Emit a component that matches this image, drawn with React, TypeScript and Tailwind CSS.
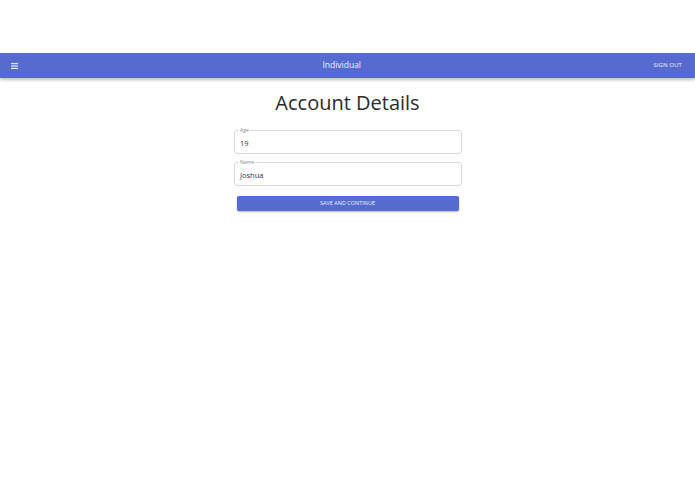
import React from "react";

function Field({ label, value }: { label: string; value: string }) {
  return (
    <div className="relative flex h-[24px] items-center rounded-[3px] border border-[#d9d9d9] px-[5px]">
      <span className="absolute -top-[3px] left-[4px] bg-white px-[1px] text-[5px] leading-[5px] text-[#8a8a8a]">
        {label}
      </span>
      <span className="pt-[1px] text-[7.5px] leading-[10px] text-[#333]">{value}</span>
    </div>
  );
}

export default function App() {
  return (
    <div className="min-h-[494px] bg-white font-['Open_Sans',sans-serif]">
      <div className="h-[53px]" />
      <header className="flex h-[25px] items-center bg-[#556bcf] px-[11px] text-white shadow-[0_2px_3px_rgba(0,0,0,0.25)]">
        <svg width="7" height="6" viewBox="0 0 7 6" className="shrink-0">
          <rect x="0" y="0" width="7" height="1.2" fill="#dfe4f7" />
          <rect x="0" y="2.4" width="7" height="1.2" fill="#dfe4f7" />
          <rect x="0" y="4.8" width="7" height="1.2" fill="#dfe4f7" />
        </svg>
        <div className="flex-1 pl-[12px] text-center text-[8.5px] text-[#eef0fb]">Individual</div>
        <div className="pr-[2px] text-[6px] tracking-[0.1px] text-[#eef0fb]">SIGN OUT</div>
      </header>
      <main className="flex flex-col items-center">
        <h1 className="mt-[11px] text-[20px] leading-[28px] text-[#2b2b2b]">Account Details</h1>
        <div className="mt-[13px] flex w-[229px] flex-col gap-[8px] pl-[1px]">
          <Field label="Age" value="19" />
          <Field label="Name" value="Joshua" />
        </div>
        <button className="mt-[10px] h-[15px] w-[222px] rounded-[2px] bg-[#556bcf] text-[5.5px] uppercase text-[#eef0fb] shadow-[0_1px_2px_rgba(0,0,0,0.3)]">
          Save and continue
        </button>
      </main>
    </div>
  );
}
